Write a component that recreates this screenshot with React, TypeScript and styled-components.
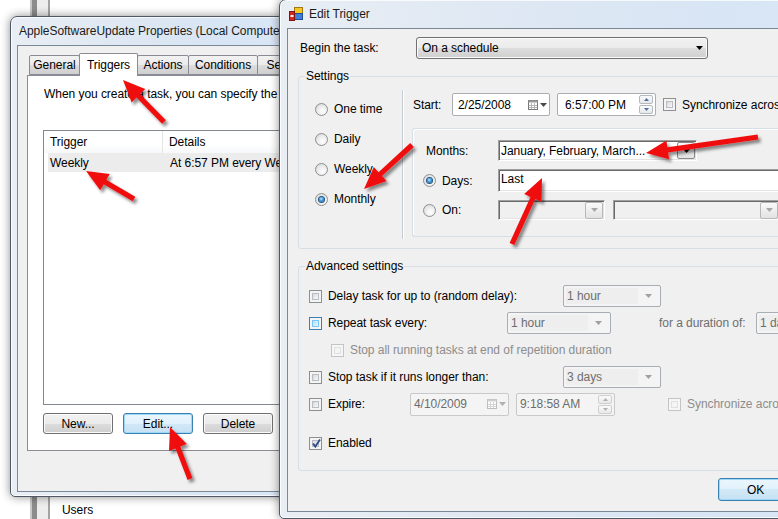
import React from "react";
import styled, { createGlobalStyle } from "styled-components";

const FONT = `"Liberation Sans", Arial, sans-serif`;

const GlobalStyle = createGlobalStyle`
  html, body { margin: 0; padding: 0; background: #fff; }
  body { font-family: ${FONT}; font-size: 12px; letter-spacing: -0.05px; color: #000; }
  *, *::before, *::after { box-sizing: border-box; }
`;

const Desktop = styled.div`
  position: relative;
  width: 778px;
  height: 519px;
  overflow: hidden;
  background: #fff;
`;

/* ---------- window behind everything ---------- */
const BgWindow = styled.div`
  position: absolute;
  left: 30px;
  top: -20px;
  width: 760px;
  height: 560px;
  display: flex;
  z-index: 0;
`;
const BgStrip = styled.div<{ $w: number; $bg: string }>`
  flex: none;
  width: ${(p) => p.$w}px;
  background: ${(p) => p.$bg};
`;
const BgBody = styled.div`
  flex: 1;
  display: flex;
  flex-direction: column;
  justify-content: flex-end;
  padding: 0 0 22px 12px;
  line-height: 15px;
  background: #fff;
`;

/* ---------- window chrome ---------- */
const Window = styled.div<{ $left: number; $top: number; $w: number; $h: number; $z: number; $pad: string }>`
  position: absolute;
  left: ${(p) => p.$left}px;
  top: ${(p) => p.$top}px;
  width: ${(p) => p.$w}px;
  height: ${(p) => p.$h}px;
  z-index: ${(p) => p.$z};
  display: flex;
  flex-direction: column;
  padding: ${(p) => p.$pad};
  border: 1px solid #4f5966;
  border-radius: 7px 7px 5px 5px;
  background: linear-gradient(90deg, #e9eef4 0%, #dfe8f3 35%, #d8e5f4 70%, #dae7f6 100%);
  box-shadow: 0 0 10px rgba(0, 0, 0, 0.45), inset 0 0 0 1px rgba(255, 255, 255, 0.75);
`;
const TitleBar = styled.div<{ $pl: number }>`
  flex: none;
  height: 28px;
  display: flex;
  align-items: center;
  gap: 5px;
  padding-left: ${(p) => p.$pl}px;
  white-space: nowrap;
  overflow: hidden;
  color: #1b1b1b;
`;
const Client = styled.div<{ $pad: string }>`
  flex: 1;
  min-height: 0;
  display: flex;
  flex-direction: column;
  padding: ${(p) => p.$pad};
  background: #f0f0f0;
  border: 1px solid #7b8896;
  overflow: hidden;
`;

/* ---------- properties window ---------- */
const TabStrip = styled.div`
  display: flex;
  align-items: flex-end;
  height: 23px;
  padding-left: 2px;
  margin-bottom: -1px;
  position: relative;
  z-index: 1;
`;
const Tab = styled.div<{ $w: number; $active?: boolean }>`
  flex: none;
  width: ${(p) => p.$w}px;
  height: ${(p) => (p.$active ? 23 : 20)}px;
  margin-bottom: ${(p) => (p.$active ? 0 : 1)}px;
  margin-left: -1px;
  display: flex;
  align-items: center;
  justify-content: center;
  border: 1px solid #898c95;
  border-bottom: ${(p) => (p.$active ? "none" : "1px solid #898c95")};
  border-radius: 2px 2px 0 0;
  position: relative;
  z-index: ${(p) => (p.$active ? 2 : 1)};
  background: ${(p) =>
    p.$active ? "#fff" : "linear-gradient(180deg,#f2f2f2 0%,#ebebeb 50%,#dddddd 50%,#cfcfcf 100%)"};
  white-space: nowrap;
  &:first-child { margin-left: 0; }
`;
const TabPanel = styled.div`
  flex: none;
  height: 376px;
  display: flex;
  flex-direction: column;
  padding: 11px 0 16px 15px;
  background: #fff;
  border: 1px solid #898c95;
  border-right: none;
`;
const Intro = styled.div`
  line-height: 15px;
  margin-left: 1px;
  white-space: nowrap;
  overflow: hidden;
`;
const ListView = styled.div`
  margin-top: 28px;
  height: 275px;
  flex: none;
  border: 1px solid #828790;
  border-right: none;
  background: #fff;
  display: flex;
  flex-direction: column;
`;
const ListHeader = styled.div`
  height: 22px;
  display: grid;
  grid-template-columns: 119px 1fr;
  background: linear-gradient(180deg, #ffffff 0%, #ffffff 60%, #f7f8fa 100%);
`;
const HeaderCell = styled.div<{ $sep?: boolean }>`
  display: flex;
  align-items: center;
  padding-left: 6px;
  border-right: ${(p) => (p.$sep ? "1px solid #e5e5e5" : "none")};
  white-space: nowrap;
  overflow: hidden;
`;
const ListRow = styled.div`
  height: 19px;
  margin-left: 4px;
  display: grid;
  grid-template-columns: 115px 1fr;
  align-items: center;
  background: #ececec;
  white-space: nowrap;
`;
const Cell = styled.div<{ $pl: number }>`
  padding-left: ${(p) => p.$pl}px;
  overflow: hidden;
`;
const ButtonRow = styled.div<{ $mt: number; $justify: string; $gap: number }>`
  display: flex;
  margin-top: ${(p) => p.$mt}px;
  justify-content: ${(p) => p.$justify};
  gap: ${(p) => p.$gap}px;
  flex: none;
`;
const PushButton = styled.div<{ $w: number; $h: number; $focused?: boolean }>`
  flex: none;
  width: ${(p) => p.$w}px;
  height: ${(p) => p.$h}px;
  display: flex;
  align-items: center;
  justify-content: center;
  border: 1px solid ${(p) => (p.$focused ? "#3c7fb1" : "#707070")};
  border-radius: 3px;
  background: ${(p) =>
    p.$focused
      ? "linear-gradient(180deg,#eaf6fd 0%,#e1f1fb 50%,#d2e9f7 50%,#c6e1f4 100%)"
      : "linear-gradient(180deg,#f2f2f2 0%,#ebebeb 50%,#dddddd 50%,#cfcfcf 100%)"};
  box-shadow: inset 0 0 0 1px ${(p) => (p.$focused ? "#9fd7f6" : "#fbfbfb")};
`;

/* ---------- edit trigger dialog ---------- */
const BeginRow = styled.div`
  display: flex;
  align-items: center;
  height: 22px;
  padding-left: 2px;
  flex: none;
`;
const FieldLabel = styled.div<{ $w: number; $pl?: number; $color?: string }>`
  flex: none;
  width: ${(p) => p.$w}px;
  padding-left: ${(p) => p.$pl ?? 0}px;
  color: ${(p) => p.$color ?? "#000"};
  white-space: nowrap;
`;
const ButtonCombo = styled.div<{ $w: number }>`
  flex: none;
  width: ${(p) => p.$w}px;
  height: 22px;
  display: flex;
  align-items: center;
  justify-content: space-between;
  padding: 0 4px 0 5px;
  border: 1px solid #707070;
  border-radius: 3px;
  background: linear-gradient(180deg, #f2f2f2 0%, #ebebeb 50%, #dddddd 50%, #cfcfcf 100%);
  box-shadow: inset 0 0 0 1px #fbfbfb;
`;
const Fieldset = styled.fieldset<{ $mt: number; $pt: number; $pb: number }>`
  margin: ${(p) => p.$mt}px 0 0 0;
  padding: ${(p) => p.$pt}px 0 ${(p) => p.$pb}px 0;
  min-width: 0;
  border: 1px solid #d5dfe5;
  border-radius: 3px;
  flex: none;
`;
const Legend = styled.legend`
  margin-left: 6px;
  padding: 0 1px;
  line-height: 16px;
  font-size: 12px;
`;
const SettingsGrid = styled.div`
  display: grid;
  grid-template-columns: 103px 1px 1fr;
`;
const RadioColumn = styled.div`
  display: flex;
  flex-direction: column;
  padding: 4px 0 0 16px;
`;
const OptionRow = styled.div<{ $h: number; $gap?: number; $pl?: number; $mt?: number }>`
  display: flex;
  align-items: center;
  height: ${(p) => p.$h}px;
  gap: ${(p) => p.$gap ?? 6}px;
  padding-left: ${(p) => p.$pl ?? 0}px;
  margin-top: ${(p) => p.$mt ?? 0}px;
  white-space: nowrap;
  flex: none;
`;
const VSeparator = styled.div`
  background: #c5ccd3;
  box-shadow: 1px 0 0 #ffffff;
`;
const RightColumn = styled.div`
  padding: 3px 0 2px 9px;
  display: flex;
  flex-direction: column;
  min-width: 0;
`;
const InlineGap = styled.div<{ $w: number }>`
  flex: none;
  width: ${(p) => p.$w}px;
`;
const DateBox = styled.div<{ $w: number; $pl: number; $disabled?: boolean }>`
  flex: none;
  width: ${(p) => p.$w}px;
  height: 23px;
  display: flex;
  align-items: center;
  gap: 2px;
  padding: 0 2px 0 ${(p) => p.$pl}px;
  border: 1px solid ${(p) => (p.$disabled ? "#c9c9c9" : "#abadb3")};
  border-radius: 2px;
  background: ${(p) => (p.$disabled ? "#f4f4f4" : "#fff")};
  color: ${(p) => (p.$disabled ? "#6d6d6d" : "#000")};
  white-space: nowrap;
`;
const Grow = styled.span`
  flex: 1;
`;
const Spinner = styled.div`
  flex: none;
  width: 14px;
  display: flex;
  flex-direction: column;
  gap: 1px;
`;
const SpinButton = styled.div<{ $disabled?: boolean }>`
  height: 9px;
  display: flex;
  align-items: center;
  justify-content: center;
  border: 1px solid ${(p) => (p.$disabled ? "#cfcfcf" : "#b4b9c0")};
  border-radius: 2px;
  background: linear-gradient(180deg, #fbfbfb, #e8e8e8);
`;
const InnerBox = styled.div`
  margin-top: 12px;
  height: 109px;
  border: 1px solid #d5dfe5;
  border-right: none;
  border-radius: 3px 0 0 3px;
  padding: 11px 0 0 0;
  display: flex;
  flex-direction: column;
  gap: 8px;
  box-shadow: inset 1px 1px 0 #fff;
`;
const InnerRow = styled.div<{ $h: number }>`
  display: grid;
  grid-template-columns: 85px 1fr;
  align-items: center;
  height: ${(p) => p.$h}px;
  white-space: nowrap;
`;
const Sunken = styled.div<{ $w?: number; $h: number; $bg: string }>`
  ${(p) => (p.$w ? `width: ${p.$w}px; flex: none;` : "flex: 1;")}
  height: ${(p) => p.$h}px;
  display: flex;
  align-items: center;
  padding: 0 1px 0 2px;
  border: 1px solid;
  border-color: #a0a0a0 #ffffff #ffffff #a0a0a0;
  box-shadow: inset 1px 1px 0 #696969, inset -1px -1px 0 #e3e3e3;
  background: ${(p) => p.$bg};
  white-space: nowrap;
  overflow: hidden;
`;
const TextTop = styled.span`
  align-self: flex-start;
  padding-top: 2px;
`;
const SmallDrop = styled.div<{ $disabled?: boolean }>`
  flex: none;
  width: 18px;
  height: 17px;
  display: flex;
  align-items: center;
  justify-content: center;
  border: 1px solid ${(p) => (p.$disabled ? "#b8b8b8" : "#8a8a8a")};
  border-radius: 2px;
  background: linear-gradient(180deg, #fafafa, #e2e2e2);
`;
const ComboPair = styled.div`
  display: flex;
  gap: 8px;
  min-width: 0;
`;
const AdvRows = styled.div`
  display: flex;
  flex-direction: column;
  gap: 5px;
  padding-left: 10px;
`;
const CheckCell = styled.div<{ $w?: number; $ml?: number; $color?: string }>`
  flex: none;
  display: flex;
  align-items: center;
  gap: 6px;
  ${(p) => (p.$w ? `width: ${p.$w}px;` : "")}
  margin-left: ${(p) => p.$ml ?? 0}px;
  color: ${(p) => p.$color ?? "#000"};
  white-space: nowrap;
`;
const DisabledCombo = styled.div<{ $w: number }>`
  flex: none;
  width: ${(p) => p.$w}px;
  height: 22px;
  display: flex;
  align-items: center;
  padding: 2px;
  border: 1px solid #a9aeb4;
  border-radius: 2px;
  background: #f4f4f4;
  color: #6d6d6d;
  white-space: nowrap;
  overflow: hidden;
`;
const ComboText = styled.span`
  flex: 1;
  align-self: stretch;
  display: flex;
  align-items: center;
  padding-left: 1px;
  background: #eeeeee;
`;
const ComboArrow = styled.span`
  flex: none;
  width: 20px;
  display: flex;
  justify-content: center;
`;
const MutedText = styled.span<{ $ml: number; $w?: number }>`
  flex: none;
  margin-left: ${(p) => p.$ml}px;
  ${(p) => (p.$w ? `width: ${p.$w}px;` : "")}
  color: #6d6d6d;
  white-space: nowrap;
`;

/* ---------- check / radio ---------- */
type CheckVariant = "normal" | "hover" | "disabled";
const CheckOuter = styled.span<{ $v: CheckVariant }>`
  flex: none;
  position: relative;
  width: 13px;
  height: 13px;
  display: inline-flex;
  padding: 2px;
  border: 1px solid ${(p) => (p.$v === "hover" ? "#3c7fb1" : p.$v === "disabled" ? "#c4c4c4" : "#8e8f8f")};
  background: ${(p) => (p.$v === "disabled" ? "#f6f6f6" : "#f4f4f4")};
`;
const CheckInner = styled.span<{ $v: CheckVariant }>`
  flex: 1;
  border: 1px solid ${(p) => (p.$v === "hover" ? "#79c6f9" : p.$v === "disabled" ? "#e0e0e0" : "#b9bdc2")};
  background: ${(p) =>
    p.$v === "hover"
      ? "linear-gradient(135deg,#b1dffd,#e9f7fe)"
      : p.$v === "disabled"
      ? "#f4f4f4"
      : "linear-gradient(135deg,#d6d9dd,#f9f9f9)"};
`;
const CheckMark = styled.svg`
  position: absolute;
  left: 1px;
  top: 0px;
`;
const Check = ({ v = "normal", checked }: { v?: CheckVariant; checked?: boolean }) => (
  <CheckOuter $v={v}>
    <CheckInner $v={v} />
    {checked && (
      <CheckMark width="11" height="11" viewBox="0 0 11 11">
        <path d="M2 5.5 L4.3 8.5 L9 1.5" fill="none" stroke="#334c8c" strokeWidth="1.9" />
      </CheckMark>
    )}
  </CheckOuter>
);
const RadioOuter = styled.span<{ $checked?: boolean }>`
  flex: none;
  width: 13px;
  height: 13px;
  border-radius: 50%;
  border: 1px solid #8e8f8f;
  background: radial-gradient(circle at 60% 65%, #ffffff 0%, #f2f2f2 35%, #cfd2d6 100%);
  display: inline-flex;
  align-items: center;
  justify-content: center;
  &::after {
    content: "";
    display: ${(p) => (p.$checked ? "block" : "none")};
    width: 5px;
    height: 5px;
    border-radius: 50%;
    background: radial-gradient(circle at 45% 40%, #c9ecff 0%, #3d97dd 45%, #0b416f 100%);
    box-shadow: 0 0 0 1px #1f5381;
  }
`;

/* ---------- small drawings ---------- */
const DropArrow = ({ color = "#000", w = 7 }: { color?: string; w?: number }) => (
  <svg width={w} height={Math.ceil(w / 2)} viewBox={`0 0 ${w} ${Math.ceil(w / 2)}`}>
    <path d={`M0 0H${w}L${w / 2} ${Math.ceil(w / 2)}Z`} fill={color} />
  </svg>
);
const UpArrow = ({ color }: { color: string }) => (
  <svg width="5" height="3" viewBox="0 0 5 3">
    <path d="M0 3H5L2.5 0Z" fill={color} />
  </svg>
);
const CalendarIcon = ({ muted }: { muted?: boolean }) => (
  <svg width="10" height="10" viewBox="0 0 10 10">
    <rect x="0.5" y="0.5" width="9" height="9" fill="#fff" stroke={muted ? "#bdbdbd" : "#7a7a7a"} />
    <rect x="0.5" y="0.5" width="9" height="2" fill={muted ? "#d0d0d0" : "#9a9a9a"} />
    <path d="M3.5 3v6M6.5 3v6M1 5.5h8M1 7.5h8" stroke={muted ? "#d6d6d6" : "#b5b5b5"} strokeWidth="1" />
  </svg>
);
const AppIcon = () => (
  <svg width="16" height="16" viewBox="0 0 16 16">
    <rect x="6.5" y="1.5" width="8" height="6" fill="#f7c623" stroke="#9d7a13" />
    <rect x="6.5" y="7.5" width="8" height="6" fill="#3f7fdc" stroke="#244b8f" />
    <rect x="1.5" y="5.5" width="5" height="9" fill="#d9261c" stroke="#7d1711" />
    <rect x="2.5" y="9" width="3" height="2" fill="#f4f4f4" />
  </svg>
);

/* ---------- red annotation arrows ---------- */
const Overlay = styled.svg`
  position: absolute;
  left: 0;
  top: 0;
  z-index: 10;
  pointer-events: none;
`;
const Arrow = ({ x1, y1, x2, y2 }: { x1: number; y1: number; x2: number; y2: number }) => {
  const dx = x2 - x1;
  const dy = y2 - y1;
  const len = Math.hypot(dx, dy);
  const ux = dx / len;
  const uy = dy / len;
  const px = -uy;
  const py = ux;
  const head = 22;
  const hw = 9.5;
  const sw = 2.6;
  const bx = x2 - ux * head;
  const by = y2 - uy * head;
  const pts = [
    [x1 + px * sw, y1 + py * sw],
    [bx + px * sw, by + py * sw],
    [bx + px * hw, by + py * hw],
    [x2, y2],
    [bx - px * hw, by - py * hw],
    [bx - px * sw, by - py * sw],
    [x1 - px * sw, y1 - py * sw],
  ]
    .map((p) => p.map((n) => n.toFixed(1)).join(","))
    .join(" ");
  return <polygon points={pts} fill="#f01010" filter="url(#arrowShadow)" />;
};

const arrows = [
  { x1: 164, y1: 122, x2: 123, y2: 80 },
  { x1: 134, y1: 199, x2: 86, y2: 171 },
  { x1: 190, y1: 479, x2: 170, y2: 427 },
  { x1: 412, y1: 145, x2: 364, y2: 189 },
  { x1: 758, y1: 137, x2: 646, y2: 153 },
  { x1: 512, y1: 244, x2: 542, y2: 178 },
];

export default function App() {
  return (
    <>
      <GlobalStyle />
      <Desktop>
        <BgWindow>
          <BgStrip $w={2} $bg="#c9c9c9" />
          <BgStrip $w={5} $bg="#8c8c8c" />
          <BgStrip $w={11} $bg="#ededed" />
          <BgStrip $w={2} $bg="#a3a3a3" />
          <BgBody>Users</BgBody>
        </BgWindow>

        <Window $left={10} $top={16} $w={298} $h={481} $z={1} $pad="0 0 4px 6px">
          <TitleBar $pl={2}>AppleSoftwareUpdate Properties (Local Computer)</TitleBar>
          <Client $pad="7px 0 0 9px">
            <TabStrip>
              <Tab $w={51}>General</Tab>
              <Tab $w={59} $active>Triggers</Tab>
              <Tab $w={52}>Actions</Tab>
              <Tab $w={70}>Conditions</Tab>
              <Tab $w={62}>Settings</Tab>
            </TabStrip>
            <TabPanel>
              <Intro>When you create a task, you can specify the conditions</Intro>
              <ListView>
                <ListHeader>
                  <HeaderCell $sep>Trigger</HeaderCell>
                  <HeaderCell>Details</HeaderCell>
                </ListHeader>
                <ListRow>
                  <Cell $pl={2}>Weekly</Cell>
                  <Cell $pl={7}>At 6:57 PM every Wednesday</Cell>
                </ListRow>
              </ListView>
              <ButtonRow $mt={8} $justify="flex-start" $gap={10}>
                <PushButton $w={70} $h={21}>New...</PushButton>
                <PushButton $w={70} $h={21} $focused>Edit...</PushButton>
                <PushButton $w={70} $h={21}>Delete</PushButton>
              </ButtonRow>
            </TabPanel>
          </Client>
        </Window>

        <Window $left={279} $top={-1} $w={614} $h={520} $z={2} $pad="0 7px 6px 7px">
          <TitleBar $pl={1}>
            <AppIcon />
            Edit Trigger
          </TitleBar>
          <Client $pad="8px 10px 0 10px">
            <BeginRow>
              <FieldLabel $w={116}>Begin the task:</FieldLabel>
              <ButtonCombo $w={292}>
                <span>On a schedule</span>
                <DropArrow />
              </ButtonCombo>
            </BeginRow>

            <Fieldset $mt={9} $pt={6} $pb={9}>
              <Legend>Settings</Legend>
              <SettingsGrid>
                <RadioColumn>
                  <OptionRow $h={30}>
                    <RadioOuter />
                    One time
                  </OptionRow>
                  <OptionRow $h={30}>
                    <RadioOuter />
                    Daily
                  </OptionRow>
                  <OptionRow $h={30}>
                    <RadioOuter />
                    Weekly
                  </OptionRow>
                  <OptionRow $h={30}>
                    <RadioOuter $checked />
                    Monthly
                  </OptionRow>
                </RadioColumn>
                <VSeparator />
                <RightColumn>
                  <OptionRow $h={23} $gap={0}>
                    <FieldLabel $w={40} $pl={1}>
                      Start:
                    </FieldLabel>
                    <DateBox $w={98} $pl={5}>
                      <span>2/25/2008</span>
                      <Grow />
                      <CalendarIcon />
                      <DropArrow color="#4a4a4a" />
                    </DateBox>
                    <InlineGap $w={7} />
                    <DateBox $w={99} $pl={7}>
                      <span>6:57:00 PM</span>
                      <Grow />
                      <Spinner>
                        <SpinButton>
                          <UpArrow color="#4d6fa3" />
                        </SpinButton>
                        <SpinButton>
                          <DropArrow color="#4d6fa3" w={5} />
                        </SpinButton>
                      </Spinner>
                    </DateBox>
                    <InlineGap $w={7} />
                    <CheckCell>
                      <Check />
                      Synchronize across time zones
                    </CheckCell>
                  </OptionRow>
                  <InnerBox>
                    <InnerRow $h={21}>
                      <FieldLabel $w={85} $pl={13}>
                        Months:
                      </FieldLabel>
                      <Sunken $w={199} $h={21} $bg="#fff">
                        <span>January, February, March...</span>
                        <Grow />
                        <SmallDrop>
                          <DropArrow />
                        </SmallDrop>
                      </Sunken>
                    </InnerRow>
                    <InnerRow $h={23}>
                      <OptionRow $h={23} $pl={10}>
                        <RadioOuter $checked />
                        Days:
                      </OptionRow>
                      <Sunken $h={23} $bg="#fff">
                        <TextTop>Last</TextTop>
                      </Sunken>
                    </InnerRow>
                    <InnerRow $h={20}>
                      <OptionRow $h={20} $pl={10}>
                        <RadioOuter />
                        On:
                      </OptionRow>
                      <ComboPair>
                        <Sunken $w={107} $h={20} $bg="#f0f0f0">
                          <Grow />
                          <SmallDrop $disabled>
                            <DropArrow color="#a8a8a8" />
                          </SmallDrop>
                        </Sunken>
                        <Sunken $w={167} $h={20} $bg="#f0f0f0">
                          <Grow />
                          <SmallDrop $disabled>
                            <DropArrow color="#a8a8a8" />
                          </SmallDrop>
                        </Sunken>
                      </ComboPair>
                    </InnerRow>
                  </InnerBox>
                </RightColumn>
              </SettingsGrid>
            </Fieldset>

            <Fieldset $mt={9} $pt={11} $pb={16}>
              <Legend>Advanced settings</Legend>
              <AdvRows>
                <OptionRow $h={22} $gap={0}>
                  <CheckCell $w={254}>
                    <Check />
                    Delay task for up to (random delay):
                  </CheckCell>
                  <DisabledCombo $w={98}>
                    <ComboText>1 hour</ComboText>
                    <ComboArrow>
                      <DropArrow color="#a0a0a0" />
                    </ComboArrow>
                  </DisabledCombo>
                </OptionRow>
                <OptionRow $h={22} $gap={0}>
                  <CheckCell $w={198}>
                    <Check v="hover" />
                    Repeat task every:
                  </CheckCell>
                  <DisabledCombo $w={104}>
                    <ComboText>1 hour</ComboText>
                    <ComboArrow>
                      <DropArrow color="#a0a0a0" />
                    </ComboArrow>
                  </DisabledCombo>
                  <MutedText $ml={48} $w={97}>
                    for a duration of:
                  </MutedText>
                  <DisabledCombo $w={98}>
                    <ComboText>1 day</ComboText>
                    <ComboArrow>
                      <DropArrow color="#a0a0a0" />
                    </ComboArrow>
                  </DisabledCombo>
                </OptionRow>
                <OptionRow $h={22} $gap={0}>
                  <CheckCell $ml={22} $color="#8d8d8d">
                    <Check v="disabled" />
                    Stop all running tasks at end of repetition duration
                  </CheckCell>
                </OptionRow>
                <OptionRow $h={22} $gap={0}>
                  <CheckCell $w={254}>
                    <Check />
                    Stop task if it runs longer than:
                  </CheckCell>
                  <DisabledCombo $w={98}>
                    <ComboText>3 days</ComboText>
                    <ComboArrow>
                      <DropArrow color="#a0a0a0" />
                    </ComboArrow>
                  </DisabledCombo>
                </OptionRow>
                <OptionRow $h={22} $gap={0}>
                  <CheckCell $w={101}>
                    <Check />
                    Expire:
                  </CheckCell>
                  <DateBox $w={99} $pl={3} $disabled>
                    <span>4/10/2009</span>
                    <Grow />
                    <CalendarIcon muted />
                    <DropArrow color="#b0b0b0" />
                  </DateBox>
                  <InlineGap $w={7} />
                  <DateBox $w={99} $pl={3} $disabled>
                    <span>9:18:58 AM</span>
                    <Grow />
                    <Spinner>
                      <SpinButton $disabled>
                        <UpArrow color="#b0b0b0" />
                      </SpinButton>
                      <SpinButton $disabled>
                        <DropArrow color="#b0b0b0" w={5} />
                      </SpinButton>
                    </Spinner>
                  </DateBox>
                  <CheckCell $ml={53} $color="#8d8d8d">
                    <Check v="disabled" />
                    Synchronize across time zones
                  </CheckCell>
                </OptionRow>
                <OptionRow $h={22} $gap={0} $mt={12}>
                  <CheckCell>
                    <Check checked />
                    Enabled
                  </CheckCell>
                </OptionRow>
              </AdvRows>
            </Fieldset>

            <ButtonRow $mt={7} $justify="flex-end" $gap={6}>
              <PushButton $w={75} $h={23} $focused>
                OK
              </PushButton>
              <PushButton $w={75} $h={23}>
                Cancel
              </PushButton>
            </ButtonRow>
          </Client>
        </Window>

        <Overlay width="778" height="519" viewBox="0 0 778 519">
          <defs>
            <filter id="arrowShadow" x="-30%" y="-30%" width="160%" height="160%">
              <feDropShadow dx="2.5" dy="3" stdDeviation="1.6" floodColor="#000" floodOpacity="0.45" />
            </filter>
          </defs>
          {arrows.map((a, i) => (
            <Arrow key={i} {...a} />
          ))}
        </Overlay>
      </Desktop>
    </>
  );
}
